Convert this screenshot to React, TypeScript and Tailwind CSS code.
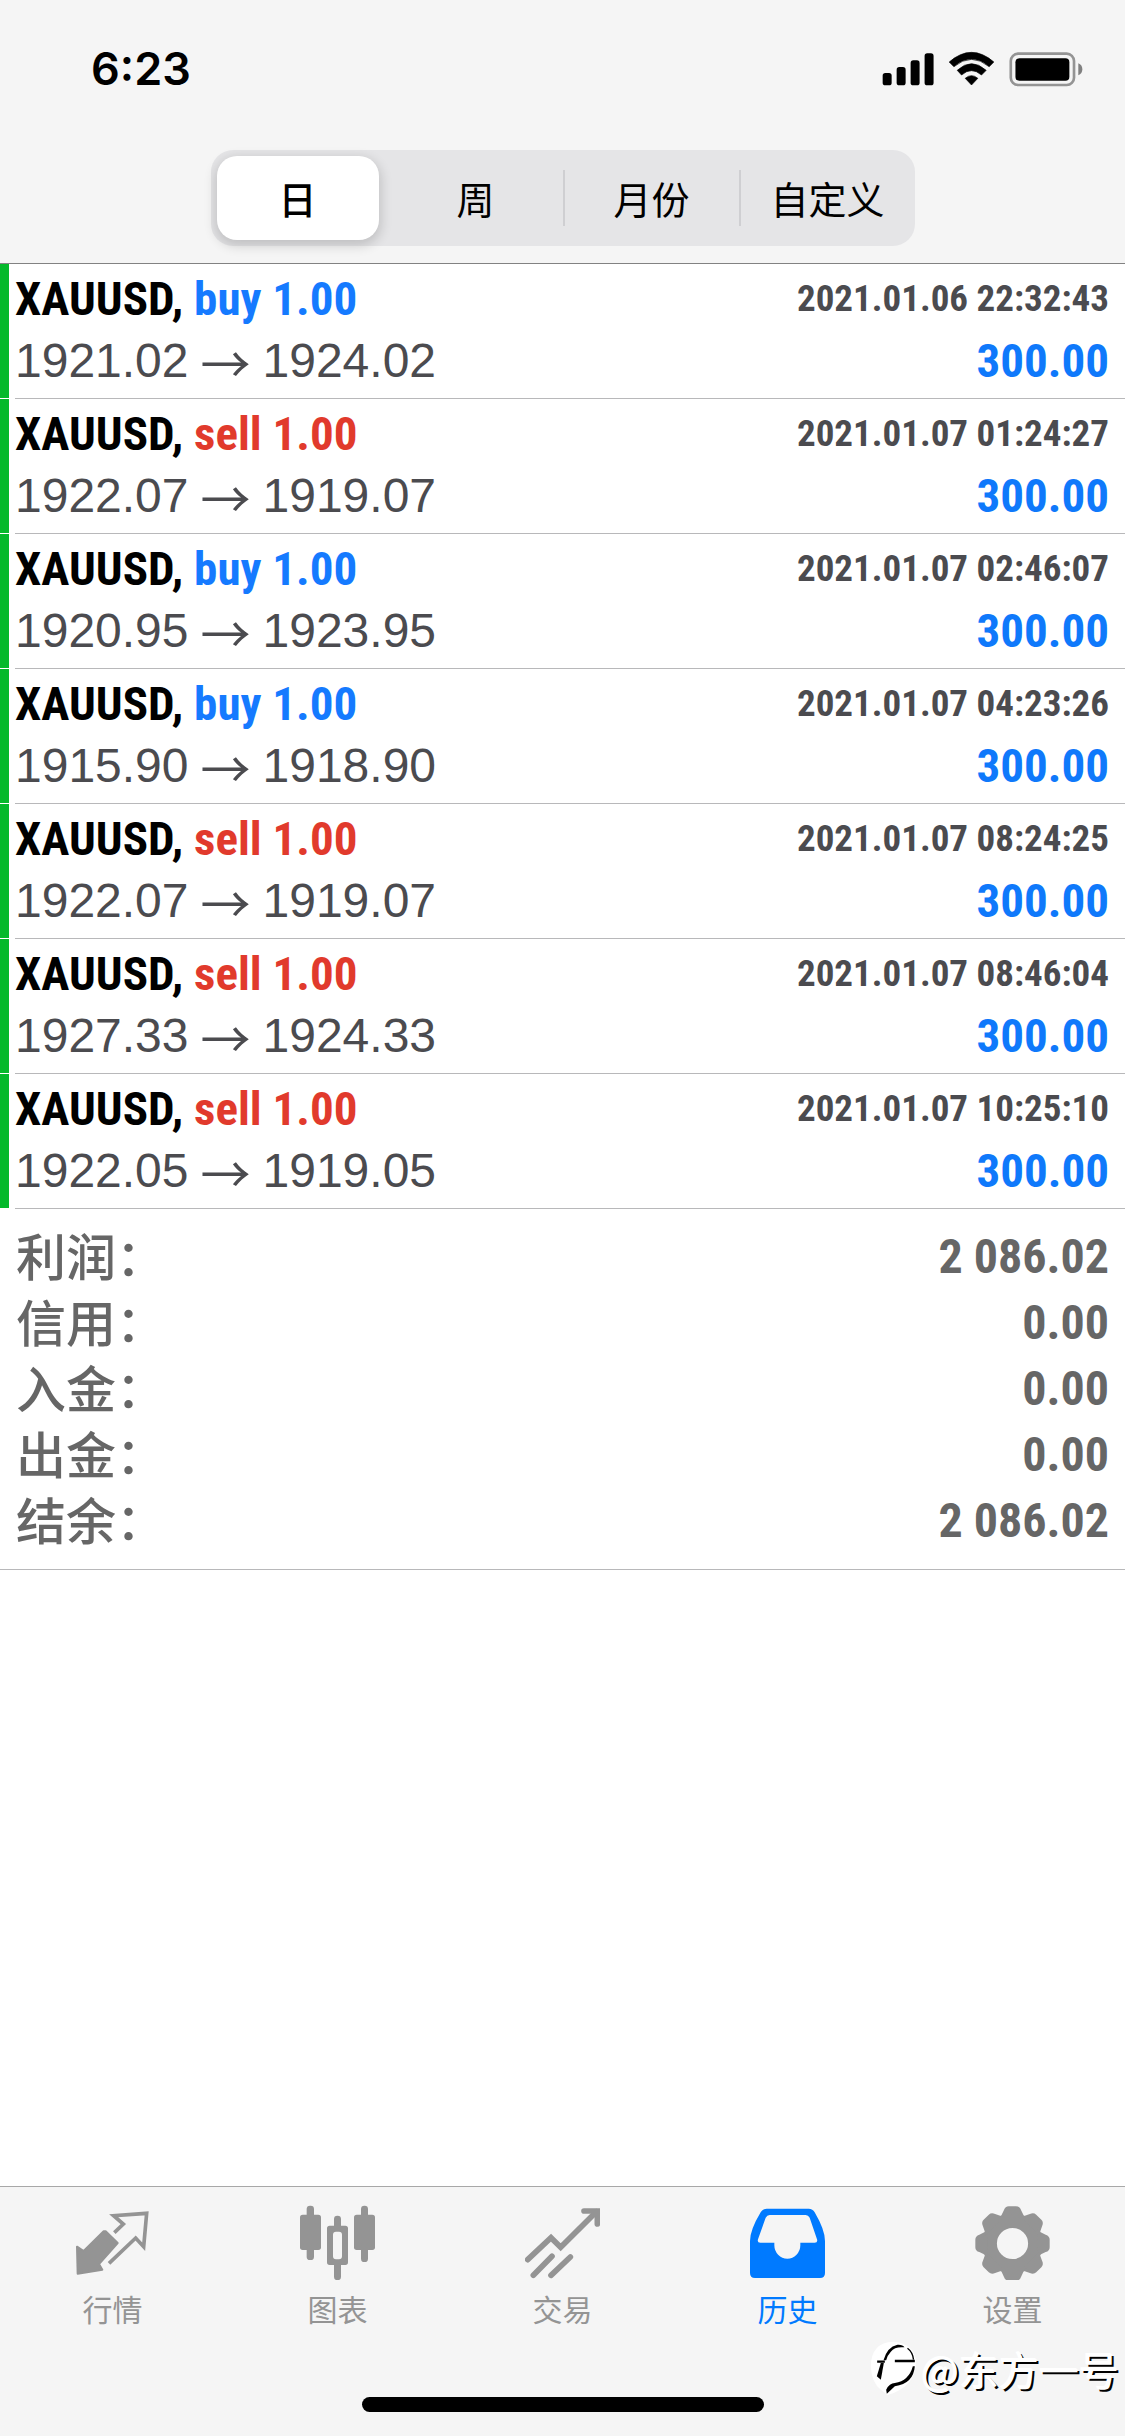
import React, { useState } from "react";

interface Deal {
  symbol: string;
  side: "buy" | "sell";
  volume: string;
  open: string;
  close: string;
  time: string;
  profit: string;
}

const DEALS: Deal[] = [
  { symbol: "XAUUSD", side: "buy", volume: "1.00", open: "1921.02", close: "1924.02", time: "2021.01.06 22:32:43", profit: "300.00" },
  { symbol: "XAUUSD", side: "sell", volume: "1.00", open: "1922.07", close: "1919.07", time: "2021.01.07 01:24:27", profit: "300.00" },
  { symbol: "XAUUSD", side: "buy", volume: "1.00", open: "1920.95", close: "1923.95", time: "2021.01.07 02:46:07", profit: "300.00" },
  { symbol: "XAUUSD", side: "buy", volume: "1.00", open: "1915.90", close: "1918.90", time: "2021.01.07 04:23:26", profit: "300.00" },
  { symbol: "XAUUSD", side: "sell", volume: "1.00", open: "1922.07", close: "1919.07", time: "2021.01.07 08:24:25", profit: "300.00" },
  { symbol: "XAUUSD", side: "sell", volume: "1.00", open: "1927.33", close: "1924.33", time: "2021.01.07 08:46:04", profit: "300.00" },
  { symbol: "XAUUSD", side: "sell", volume: "1.00", open: "1922.05", close: "1919.05", time: "2021.01.07 10:25:10", profit: "300.00" },
];

const SUMMARY = [
  { label: "利润：", value: "2 086.02" },
  { label: "信用：", value: "0.00" },
  { label: "入金：", value: "0.00" },
  { label: "出金：", value: "0.00" },
  { label: "结余：", value: "2 086.02" },
];

const PERIODS = ["日", "周", "月份", "自定义"];

const QuotesIcon = () => (
  <svg viewBox="72 75 225 225" className="w-[75px] h-[75px]" fill="none" stroke="currentColor" strokeLinejoin="round" aria-hidden="true">
    <path d="M164 154 L200 189 L144 252 L154 269 L80 281 L78 200 L98 213 L158 154 Z" fill="currentColor" strokeWidth="6" />
    <path d="M190 158 L217 132 L188 107 L287 100 L278 200 L254 174 L174 250" strokeWidth="11" strokeLinejoin="miter" />
  </svg>
);

const ChartsIcon = () => (
  <svg viewBox="747 75 225 225" className="w-[75px] h-[75px]" fill="currentColor" aria-hidden="true">
    <rect x="767" y="77" width="22" height="163" rx="10" />
    <rect x="747" y="104" width="63" height="106" rx="8" />
    <rect x="930" y="77" width="21" height="169" rx="10" />
    <rect x="909" y="104" width="63" height="106" rx="8" />
    <rect x="849" y="107" width="21" height="40" rx="10" />
    <rect x="849" y="245" width="21" height="55" rx="10" />
    <path fillRule="evenodd" d="M836 137h47a8 8 0 0 1 8 8v102a8 8 0 0 1-8 8h-47a8 8 0 0 1-8-8V145a8 8 0 0 1 8-8ZM855 155a9 9 0 0 0-9 9v65a9 9 0 0 0 9 9h9a9 9 0 0 0 9-9v-65a9 9 0 0 0-9-9Z" />
  </svg>
);

const TradeIcon = () => (
  <svg viewBox="72 75 225 225" className="w-[75px] h-[75px]" fill="none" stroke="currentColor" strokeWidth="17" strokeLinecap="round" aria-hidden="true">
    <path d="M80 239 L150 173 L179 202 L286 95" />
    <path d="M249 93 H289 V132" />
    <path d="M97 286 L153 229 M150 286 L208 231" />
  </svg>
);

const HistoryIcon = () => (
  <svg viewBox="747 75 225 225" className="w-[75px] h-[75px]" fill="currentColor" aria-hidden="true">
    <path
      fillRule="evenodd"
      d="M797 86H923Q935 86 941 97Q972 150 972 183V279Q972 294 957 294H762Q747 294 747 279V183Q747 150 779 97Q785 86 797 86ZM806 105Q798 105 794 113L771 178Q768 188 778 188H820V196A39 40 0 0 0 898 196V188H941Q951 188 948 178L926 113Q922 105 914 105Z"
    />
  </svg>
);

const TEETH = [0, 45, 90, 135, 180, 225, 270, 315];

const SettingsIcon = () => (
  <svg viewBox="-113 -116 226 226" className="w-[75px] h-[75px]" fill="currentColor" aria-hidden="true">
    <circle r="66" fill="none" stroke="currentColor" strokeWidth="38" />
    {TEETH.map((angle) => (
      <path key={angle} transform={`rotate(${angle})`} d="M-42 -74Q-32 -84 -26 -100Q-22 -112 -11 -112H11Q22 -112 26 -100Q32 -84 42 -74Z" />
    ))}
  </svg>
);

const TABS = [
  { label: "行情", Icon: QuotesIcon },
  { label: "图表", Icon: ChartsIcon },
  { label: "交易", Icon: TradeIcon },
  { label: "历史", Icon: HistoryIcon },
  { label: "设置", Icon: SettingsIcon },
];

const StatusBar = () => (
  <div className="h-[138px] flex items-center justify-between pl-[91px] pr-[42px]">
    <span className="font-['Inter',sans-serif] text-[45px] leading-[48px] font-semibold text-black">6:23</span>
    {/* signal, wifi, battery */}
    <svg viewBox="94 62 604 108" className="w-[201px] h-[36px]" aria-hidden="true">
      <rect x="96" y="128" width="27" height="37" rx="8" />
      <rect x="138" y="110" width="27" height="55" rx="8" />
      <rect x="180" y="90" width="27" height="75" rx="8" />
      <rect x="222" y="69" width="27" height="96" rx="8" />
      <path d="M296 95Q363 37 430 95L416 109Q363 65 310 109Z" stroke="black" strokeWidth="2" strokeLinejoin="round" />
      <path d="M320 120Q363 80 407 120L393 134Q363 108 333 134Z" stroke="black" strokeWidth="2" strokeLinejoin="round" />
      <path d="M344 144Q363 128 382 144L363 164Z" stroke="black" strokeWidth="2" strokeLinejoin="round" />
      <rect x="481" y="70" width="190" height="94" rx="22" fill="none" stroke="#949494" strokeWidth="8" />
      <rect x="495" y="84" width="162" height="67" rx="12" />
      <path d="M684 99Q696 104 696 117T684 135Z" fill="#808080" />
    </svg>
  </div>
);

interface PeriodPickerProps {
  selected: number;
  onSelect: (index: number) => void;
}

const PeriodPicker: React.FC<PeriodPickerProps> = ({ selected, onSelect }) => (
  <div className="mx-auto mt-3 mb-[17px] w-[704px] max-w-full h-24 grid grid-cols-4 rounded-[22px] bg-[#e5e5e7]">
    {PERIODS.map((period, index) => {
      const divided = index > 0 && index !== selected && index - 1 !== selected;
      return (
        <div key={period} className="flex items-center">
          <span className={`w-[2px] h-14 ${divided ? "bg-[#cfcfd2]" : "bg-transparent"}`} />
          <button
            type="button"
            aria-pressed={index === selected}
            onClick={() => onSelect(index)}
            className={`flex-1 h-[84px] ml-1 rounded-[20px] text-[38px] leading-[48px] text-black cursor-pointer whitespace-nowrap ${
              index === selected ? "mr-2 bg-white font-medium shadow-[0_4px_12px_2px_rgba(0,0,0,0.16)]" : "mr-1"
            }`}
          >
            {period}
          </button>
        </div>
      );
    })}
  </div>
);

const DealRow: React.FC<{ deal: Deal }> = ({ deal }) => (
  <li className="flex gap-1.5">
    <span className="w-[9px] mb-px bg-[#04b92b]" />
    <div className="flex-1 pt-1 pb-1.5 pr-4 border-b border-[#b8b8ba]">
      <div className="flex items-center justify-between font-['Roboto_Condensed','Open_Sans_Condensed','Noto_Sans_Condensed','Liberation_Sans',sans-serif] font-bold leading-[62px]">
        <span className="text-[47px] text-black">
          {deal.symbol},{" "}
          <span className={deal.side === "buy" ? "text-[#157aff]" : "text-[#e13a2c]"}>
            {deal.side} {deal.volume}
          </span>
        </span>
        <time className="text-[37px] text-[#4b4b4f]">{deal.time}</time>
      </div>
      <div className="flex items-center justify-between leading-[62px]">
        <span className="flex items-center gap-3 text-[48px] font-['Liberation_Sans',sans-serif] text-[#4b4b4f]">
          <span>{deal.open}</span>
          <span className="font-['Noto_Sans_CJK_SC',sans-serif] text-[50px]">→</span>
          <span>{deal.close}</span>
        </span>
        <span className="font-['Roboto_Condensed','Open_Sans_Condensed','Noto_Sans_Condensed','Liberation_Sans',sans-serif] text-[47px] font-bold text-[#0f79fb]">
          {deal.profit}
        </span>
      </div>
    </div>
  </li>
);

const Watermark = () => (
  <div className="absolute right-1.5 bottom-10 flex items-center gap-1">
    <svg viewBox="38 58 140 165" className="w-[47px] h-[55px]" fill="none" aria-hidden="true">
      <path d="M70 204Q42 182 40 135Q40 62 108 60Q170 64 176 120Q174 196 90 220Z" fill="white" />
      <path d="M78 116Q88 76 120 69Q136 68 141 77Q112 74 100 90Q90 100 86 116Z" fill="black" />
      <path d="M59 120H82M112 118H172" stroke="black" strokeWidth="7" />
      <path d="M150 80Q166 92 168 114" stroke="black" strokeWidth="4" />
      <path d="M79 124L70 174L58 164L70 124Z" fill="black" />
      <path d="M172 134Q168 186 112 194L88 216L86 204Q96 184 112 184Q154 178 166 134Z" fill="black" />
    </svg>
    <span className="text-[40px] leading-[48px] text-white [text-shadow:-1px_-1px_0_#fff,2px_2px_0_#000]">@东方一号</span>
  </div>
);

export default function App() {
  const [period, setPeriod] = useState(0);
  const [tab, setTab] = useState(3);

  return (
    <div className="relative min-h-screen flex flex-col bg-white font-['Noto_Sans_CJK_SC',sans-serif]">
      <header className="bg-[#f5f5f5] border-b border-[#828282]">
        <StatusBar />
        <PeriodPicker selected={period} onSelect={setPeriod} />
      </header>

      <main className="flex-1">
        <ul>
          {DEALS.map((deal) => (
            <DealRow key={deal.time} deal={deal} />
          ))}
        </ul>
        <dl className="px-4 py-[15px] border-b border-[#b8b8ba] text-[#666666]">
          {SUMMARY.map(({ label, value }) => (
            <div key={label} className="h-[66px] flex items-start justify-between">
              <dt className="text-[50px] leading-[60px] font-medium">{label}</dt>
              <dd className="font-['Roboto_Condensed','Open_Sans_Condensed','Noto_Sans_Condensed','Liberation_Sans',sans-serif] text-[48px] leading-[66px] font-bold">
                {value}
              </dd>
            </div>
          ))}
        </dl>
      </main>

      <footer className="bg-[#f5f5f5] border-t border-[#a8a8a8]">
        <nav className="grid grid-cols-5 pt-[18px]">
          {TABS.map(({ label, Icon }, index) => (
            <button
              key={label}
              type="button"
              aria-current={index === tab ? "page" : undefined}
              onClick={() => setTab(index)}
              className={`flex flex-col items-center gap-1 cursor-pointer ${index === tab ? "text-[#007aff]" : "text-[#949494]"}`}
            >
              <Icon />
              <span className="text-[30px] leading-[48px]">{label}</span>
            </button>
          ))}
        </nav>
        <div className="mx-auto mt-[65px] mb-6 w-[402px] h-[15px] rounded-full bg-black" />
      </footer>
      <Watermark />
    </div>
  );
}
